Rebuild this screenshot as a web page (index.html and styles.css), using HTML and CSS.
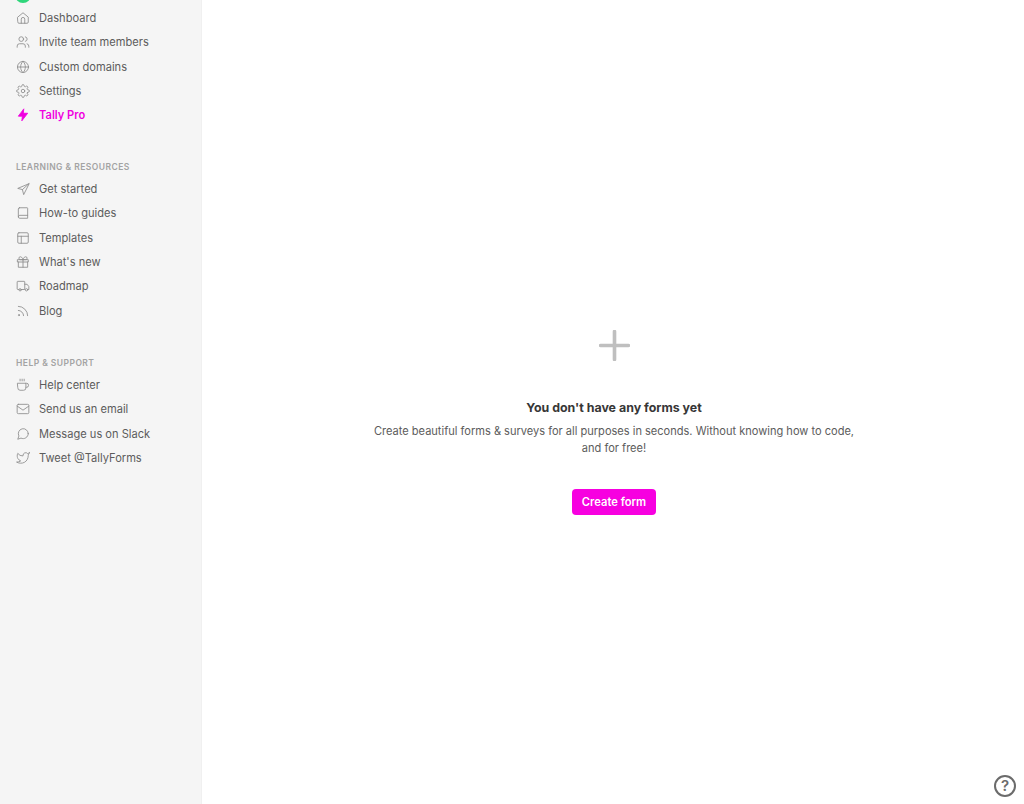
FILE: index.html
```html
<!DOCTYPE html>
<html lang="en">
<head>
    <meta charset="UTF-8">
    <meta name="viewport" content="width=device-width, initial-scale=1.0">
    <title>Tally</title>
    <link rel="stylesheet" href="styles.css">
</head>
<body>
    <div class="layout">
        <aside class="sidebar">
            <div class="avatar"></div>
            <nav class="nav-group">
                <a class="nav-item"><svg viewBox="0 0 24 24"><path d="M3 10.500 12 3l9 7.500V19a2 2 0 0 1-2 2H5a2 2 0 0 1-2-2z"/><path d="M9 21v-7a3 3 0 0 1 6 0v7"/></svg>Dashboard</a>
                <a class="nav-item"><svg viewBox="0 0 24 24"><circle cx="9" cy="7" r="4"/><path d="M2 21v-2a4 4 0 0 1 4-4h6a4 4 0 0 1 4 4v2"/><path d="M16 3.100a4 4 0 0 1 0 7.800"/><path d="M22 21v-2a4 4 0 0 0-3-3.900"/></svg>Invite team members</a>
                <a class="nav-item"><svg viewBox="0 0 24 24"><circle cx="12" cy="12" r="9.500"/><path d="M2.500 12h19"/><path d="M12 2.500c3 2.800 4 6 4 9.500s-1 6.700-4 9.500c-3-2.800-4-6-4-9.500s1-6.700 4-9.500z"/></svg>Custom domains</a>
                <a class="nav-item"><svg viewBox="0 0 24 24"><circle cx="12" cy="12" r="3"/><path d="M19.400 15a1.650 1.650 0 0 0 .33 1.820l.06.06a2 2 0 1 1-2.830 2.830l-.06-.06a1.650 1.650 0 0 0-2.820 1.170V21a2 2 0 0 1-4 0v-.09a1.650 1.650 0 0 0-2.820-1.170l-.06.06a2 2 0 1 1-2.830-2.830l.06-.06A1.650 1.650 0 0 0 3.090 14H3a2 2 0 0 1 0-4h.09a1.650 1.650 0 0 0 1.170-2.820l-.06-.06a2 2 0 1 1 2.830-2.830l.06.06A1.650 1.650 0 0 0 10 3.090V3a2 2 0 0 1 4 0v.09a1.650 1.650 0 0 0 2.820 1.170l.06-.06a2 2 0 1 1 2.830 2.830l-.06.06A1.650 1.650 0 0 0 20.910 10H21a2 2 0 0 1 0 4h-.09a1.650 1.650 0 0 0-1.510 1z"/></svg>Settings</a>
                <a class="nav-item nav-pro"><svg viewBox="0 0 24 24"><path class="solid" d="M13 2 4 14h7l-1 8 10-13h-7z"/></svg>Tally Pro</a>
            </nav>

            <h3 class="nav-title">Learning &amp; resources</h3>
            <nav class="nav-group">
                <a class="nav-item"><svg viewBox="0 0 24 24"><path d="M22 3 3 11l8 2 2 8z"/><path d="M22 3 11 13"/></svg>Get started</a>
                <a class="nav-item"><svg viewBox="0 0 24 24"><path d="M6 3h13a1 1 0 0 1 1 1v17H6.500A2.500 2.500 0 0 1 4 18.500V5a2 2 0 0 1 2-2z"/><path d="M4 18.500A2.500 2.500 0 0 1 6.500 16H20"/></svg>How-to guides</a>
                <a class="nav-item"><svg viewBox="0 0 24 24"><rect x="3" y="3" width="18" height="18" rx="2"/><path d="M3 9h18"/><path d="M9 21V9"/></svg>Templates</a>
                <a class="nav-item"><svg viewBox="0 0 24 24"><path d="M3 8h18v4H3z"/><path d="M20 12v9H4v-9"/><path d="M12 8v13"/><path d="M12 8H7.500a2.500 2.500 0 0 1 0-5C11 3 12 8 12 8z"/><path d="M12 8h4.500a2.500 2.500 0 0 0 0-5C13 3 12 8 12 8z"/></svg>What's new</a>
                <a class="nav-item"><svg viewBox="0 0 24 24"><path d="M5 18H3a1 1 0 0 1-1-1V5a1 1 0 0 1 1-1h11a1 1 0 0 1 1 1v13H9"/><path d="M15 9h4l3 4v5h-2"/><circle cx="7" cy="18.500" r="2"/><circle cx="18" cy="18.500" r="2"/></svg>Roadmap</a>
                <a class="nav-item"><svg viewBox="0 0 24 24"><path d="M4 11a9 9 0 0 1 9 9"/><path d="M4 4a16 16 0 0 1 16 16"/><circle cx="5" cy="19" r="1"/></svg>Blog</a>
            </nav>

            <h3 class="nav-title nav-title-help">Help &amp; support</h3>
            <nav class="nav-group">
                <a class="nav-item"><svg viewBox="0 0 24 24"><path d="M17 9h1a3.500 3.500 0 0 1 0 7h-1"/><path d="M3 9h14v8a4 4 0 0 1-4 4H7a4 4 0 0 1-4-4z"/><path d="M7 2v3"/><path d="M10.500 2v3"/><path d="M14 2v3"/></svg>Help center</a>
                <a class="nav-item"><svg viewBox="0 0 24 24"><rect x="2" y="4" width="20" height="16" rx="2"/><path d="m2 7 10 7 10-7"/></svg>Send us an email</a>
                <a class="nav-item"><svg viewBox="0 0 24 24"><path d="M21 11.500a8.500 8.500 0 0 1-12.400 7.500L3 21l2-5.600A8.500 8.500 0 1 1 21 11.500z"/></svg>Message us on Slack</a>
                <a class="nav-item"><svg viewBox="0 0 24 24"><path d="M23 3a10.900 10.900 0 0 1-3 1.500 4.500 4.500 0 0 0-7.900 3v1A10.700 10.700 0 0 1 3 4s-4 9 5 13a11.600 11.600 0 0 1-7 2c9 5 20 0 20-11.500 0-.3 0-.6-.1-.8A7.700 7.700 0 0 0 23 3z"/></svg>Tweet @TallyForms</a>
            </nav>
        </aside>

        <main class="content">
            <div class="empty">
                <svg class="empty-icon" viewBox="0 0 30 30"><path d="M15 1.500v27M1.500 15h27"/></svg>
                <h2>You don't have any forms yet</h2>
                <p>Create beautiful forms &amp; surveys for all purposes in seconds. Without knowing how to code, and for free!</p>
                <button>Create form</button>
            </div>
        </main>
    </div>

    <a class="help-btn">?</a>
</body>
</html>
```

FILE: styles.css
```css
body {
    font-family: "Inter", "Liberation Sans", sans-serif;
    background-color: #fff;
    margin: 0;
    padding: 0;
    overflow: hidden;
}
.layout {
    display: flex;
    height: 804px;
}
.sidebar {
    width: 202px;
    flex-shrink: 0;
    box-sizing: border-box;
    background-color: #f5f5f5;
    border-right: 1px solid #f0f0f0;
    padding: 0 16px;
    overflow: hidden;
}
.avatar {
    width: 16px;
    height: 16px;
    margin: -13px 0 2.600px -1px;
    border-radius: 50%;
    background-color: #2fd67b;
}
.nav-group {
    display: flex;
    flex-direction: column;
}
.nav-item {
    display: flex;
    align-items: center;
    height: 24.4px;
    font-size: 11.1px;
    color: #5c5c5c;
}
.nav-item svg {
    width: 14px;
    height: 14px;
    margin-right: 9px;
    flex-shrink: 0;
    fill: none;
    stroke: #8f8f8f;
    stroke-width: 1.500;
    stroke-linecap: round;
    stroke-linejoin: round;
}
.nav-pro {
    color: #f000e0;
    font-weight: 600;
}
.nav-item svg .solid {
    fill: #f000e0;
    stroke: #f000e0;
}
.nav-title {
    margin: 32.500px 0 2.500px;
    height: 14px;
    line-height: 14px;
    font-size: 8.500px;
    font-weight: 600;
    letter-spacing: 0.45px;
    text-transform: uppercase;
    color: #a3a3a3;
}
.nav-title-help {
    margin-top: 33.300px;
}
.content {
    flex: 1;
    display: flex;
    justify-content: center;
    padding-left: 2px;
}
.empty {
    width: 490px;
    padding-top: 330px;
    text-align: center;
}
.empty-icon {
    display: block;
    width: 31px;
    height: 31px;
    margin: 0 auto;
    fill: none;
    stroke: #bfbfbf;
    stroke-width: 3.500;
    stroke-linecap: round;
}
h2 {
    margin: 38px 0 6px;
    font-size: 12.400px;
    line-height: 18px;
    font-weight: 700;
    color: #373737;
}
p {
    margin: 0;
    font-size: 11.050px;
    line-height: 17px;
    color: #5c5c5c;
}
button {
    margin-top: 32px;
    height: 26px;
    width: 84px;
    padding: 0;
    font-family: inherit;
    font-size: 11.200px;
    font-weight: 600;
    color: #fff;
    background-color: #f700e0;
    border: none;
    border-radius: 4px;
}
.help-btn {
    position: absolute;
    right: 8px;
    bottom: 7px;
    width: 18px;
    height: 18px;
    border: 2px solid #6b6b6b;
    border-radius: 50%;
    font-size: 15px;
    line-height: 18px;
    font-weight: 600;
    text-align: center;
    color: #6b6b6b;
}
```
